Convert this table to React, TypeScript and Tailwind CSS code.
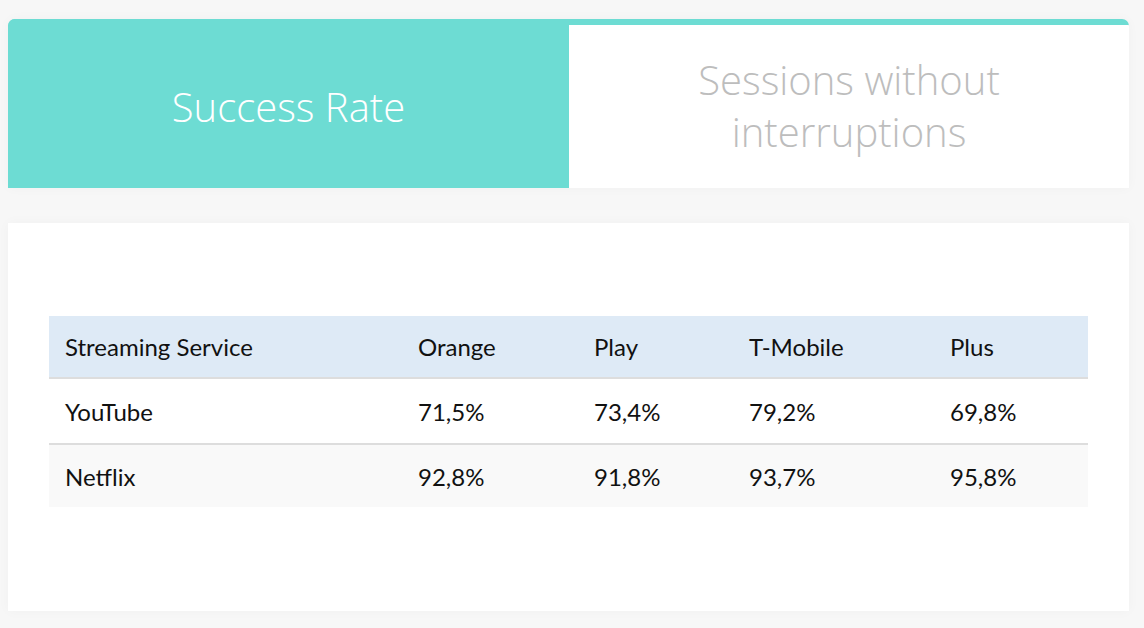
import { useState } from 'react';

const rows = [
  { name: 'YouTube', values: ['71,5%', '73,4%', '79,2%', '69,8%'] },
  { name: 'Netflix', values: ['92,8%', '91,8%', '93,7%', '95,8%'] },
];

const headers = ['Streaming Service', 'Orange', 'Play', 'T-Mobile', 'Plus'];
const colWidths = ['w-[353px]', 'w-[176px]', 'w-[155px]', 'w-[201px]', 'w-[154px]'];

export default function App() {
  const [active, setActive] = useState(0);

  return (
    <div className="min-h-[628px] w-[1144px] bg-[#f7f7f7] pt-[19px] pl-[8px]">
      {/* Tabs */}
      <div className="flex w-[1121px] h-[169px] rounded-t-[7px] bg-[#6ddcd3] shadow-[0_0_12px_rgba(0,0,0,0.03)] overflow-hidden">
        <button
          onClick={() => setActive(0)}
          className={`w-[561px] h-full flex items-center justify-center pt-[6px] text-[40px] font-light font-['Open_Sans',sans-serif] ${
            active === 0 ? 'bg-[#6ddcd3] text-white' : 'bg-white text-[#bdbdbd] mt-[6px]'
          }`}
        >
          Success Rate
        </button>
        <button
          onClick={() => setActive(1)}
          className={`w-[560px] flex items-center justify-center text-center leading-[52px] text-[40px] font-light font-['Open_Sans',sans-serif] ${
            active === 1 ? 'bg-[#6ddcd3] text-white h-full' : 'bg-white text-[#bdbdbd] mt-[6px] h-[163px] pb-[2px]'
          }`}
        >
          Sessions without
          <br />
          interruptions
        </button>
      </div>

      {/* Content */}
      <div className="mt-[35px] w-[1121px] h-[388px] bg-white shadow-[0_0_12px_rgba(0,0,0,0.03)] pt-[93px] px-[41px]">
        <table className="w-[1039px] border-collapse font-['Lato',sans-serif] text-[24px] text-[#111111]">
          <thead>
            <tr className="bg-[#deeaf6] h-[62px] border-b-2 border-[#dddddd]">
              {headers.map((h, i) => (
                <th key={h} className={`${colWidths[i]} text-left font-normal pl-[16px]`}>
                  {h}
                </th>
              ))}
            </tr>
          </thead>
          <tbody>
            {rows.map((row, r) => (
              <tr
                key={row.name}
                className={r === 0 ? 'h-[66px] bg-white border-b-2 border-[#dddddd]' : 'h-[63px] bg-[#f9f9f9]'}
              >
                <td className="pl-[16px] pt-[1px]">{row.name}</td>
                {row.values.map((v, i) => (
                  <td key={i} className="pl-[16px] pt-[1px]">
                    {v}
                  </td>
                ))}
              </tr>
            ))}
          </tbody>
        </table>
      </div>
    </div>
  );
}
